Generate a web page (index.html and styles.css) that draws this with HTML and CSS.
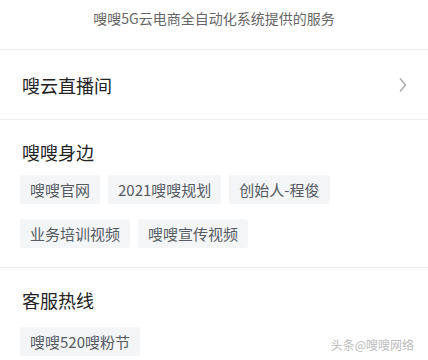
FILE: index.html
```html
<!DOCTYPE html>
<html lang="zh-CN">
<head>
<meta charset="utf-8">
<link rel="stylesheet" href="styles.css">
</head>
<body>
<div class="page">
  <div class="top">嗖嗖5G云电商全自动化系统提供的服务</div>
  <div class="row">
    <span class="row-title">嗖云直播间</span>
    <svg class="chev" width="8" height="16" viewBox="0 0 8 16"><path d="M1 1.5 L6.5 8 L1 14.5" fill="none" stroke="#a8a8a8" stroke-width="1.4"/></svg>
  </div>
  <div class="section">
    <div class="heading">嗖嗖身边</div>
    <div class="tags">
      <span class="tag">嗖嗖官网</span>
      <span class="tag">2021嗖嗖规划</span>
      <span class="tag">创始人-程俊</span>
      <span class="tag">业务培训视频</span>
      <span class="tag">嗖嗖宣传视频</span>
    </div>
  </div>
  <div class="section last">
    <div class="heading">客服热线</div>
    <div class="tags">
      <span class="tag">嗖嗖520嗖粉节</span>
    </div>
    <div class="watermark">头条@嗖嗖网络</div>
  </div>
</div>
</body>
</html>
```

FILE: styles.css
```css
* { box-sizing: border-box; }
html, body { margin: 0; padding: 0; background: #fff; }
body { font-family: "Noto Sans CJK SC", "Noto Sans", sans-serif; }
.page { width: 428px; height: 360px; overflow: hidden; position: relative; }
.top {
  height: 50px;
  border-bottom: 1px solid #ececec;
  display: flex;
  align-items: center;
  justify-content: center;
  padding-bottom: 14px;
  font-size: 14px;
  color: #666;
}
.row {
  height: 70px;
  border-bottom: 1px solid #ececec;
  display: flex;
  align-items: center;
  justify-content: space-between;
  padding: 0 22px 0 22px;
}
.row-title { font-size: 18px; color: #222; line-height: 24px; }
.chev { margin-right: -1px; }
.section {
  padding: 20px 22px 19px 20px;
  border-bottom: 1px solid #ececec;
}
.section.last { border-bottom: none; position: relative; height: 93px; }
.section.last .tags { margin-top: 15px; }
.heading { font-size: 18px; color: #222; line-height: 24px; padding-left: 2px; }
.tags {
  margin-top: 11px;
  display: flex;
  flex-wrap: wrap;
  gap: 15px 8px;
}
.tag {
  height: 29px;
  line-height: 29px;
  padding: 0 10px;
  background: #f4f5f6;
  border-radius: 3px;
  font-size: 15px;
  color: #555a63;
}
.watermark {
  position: absolute;
  right: 14px;
  bottom: 8px;
  font-size: 12px;
  color: #bbb;
  text-shadow: 0 0 1px #fff;
}
```
